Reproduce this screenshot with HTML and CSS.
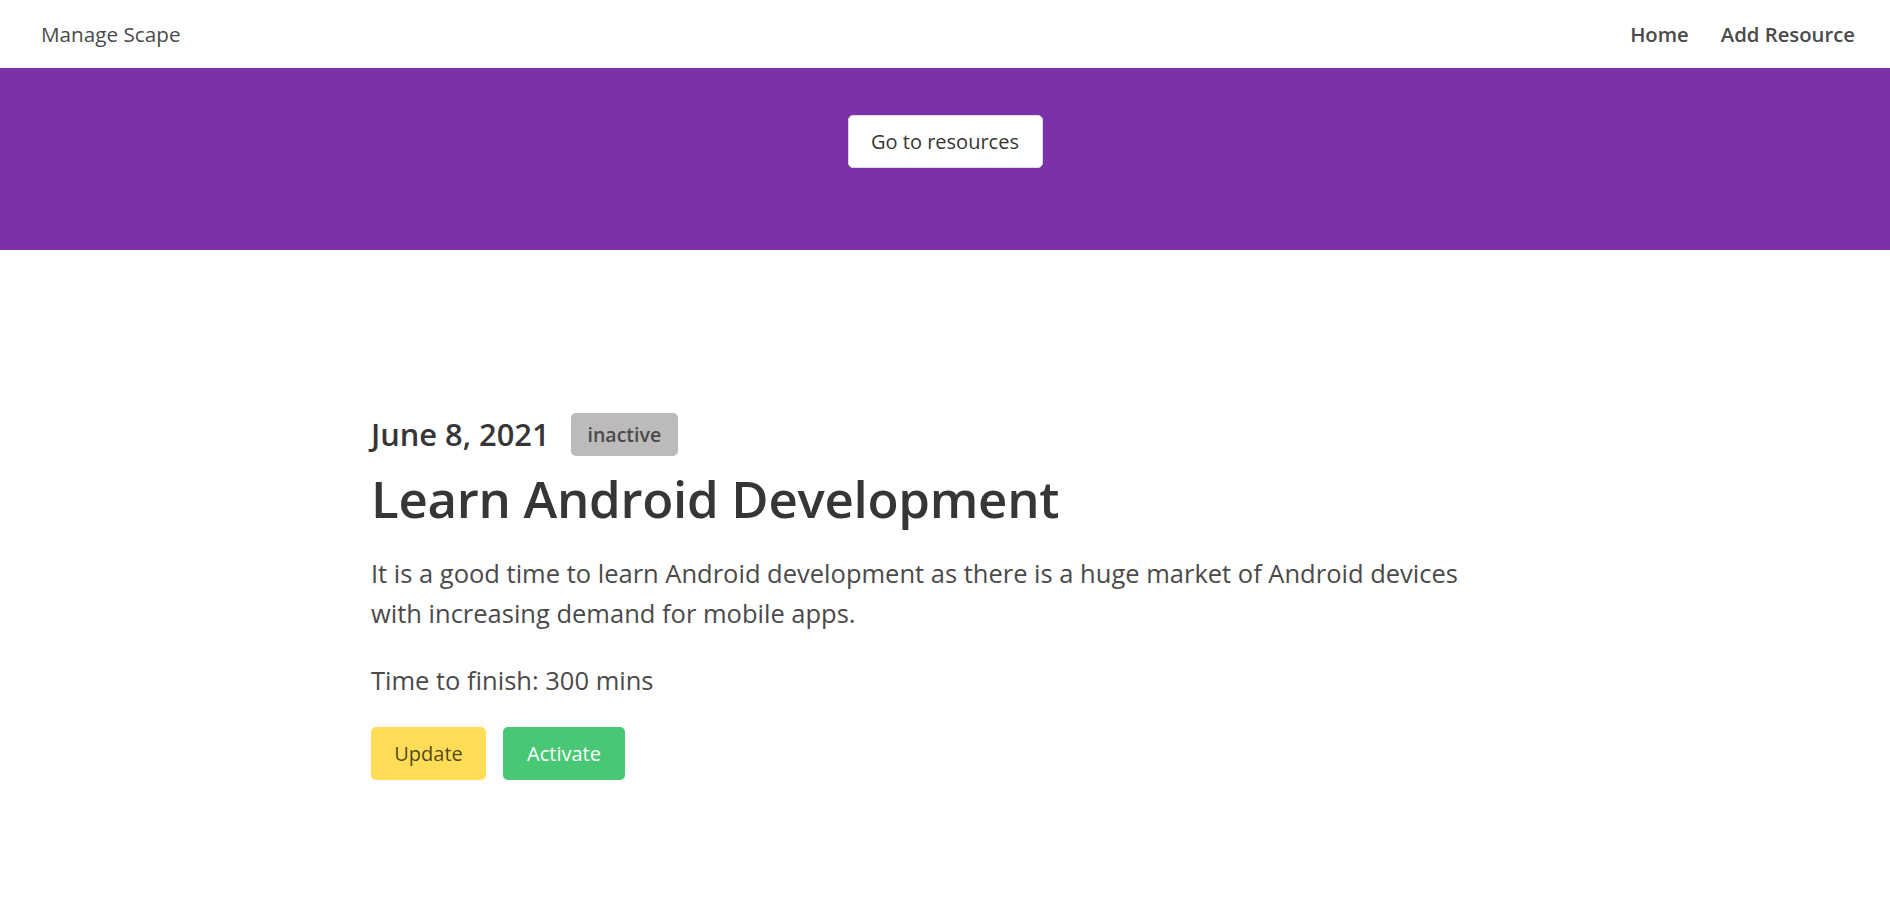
FILE: index.html
```html
<!DOCTYPE html>
<html lang="en">
<head>
<meta charset="utf-8">
<title>Manage Scape</title>
<link rel="stylesheet" href="styles.css">
</head>
<body>
<nav class="navbar">
  <a class="navbar-brand" href="#">Manage Scape</a>
  <div class="navbar-menu">
    <a class="navbar-item" href="#">Home</a>
    <a class="navbar-item" href="#">Add Resource</a>
  </div>
</nav>
<section class="hero">
  <a class="button button-light" href="#">Go to resources</a>
</section>
<section class="section">
  <div class="container">
    <div class="meta">
      <h2 class="subtitle">June 8, 2021</h2>
      <span class="tag">inactive</span>
    </div>
    <h1 class="title">Learn Android Development</h1>
    <p class="description">It is a good time to learn Android development as there is a huge market of Android devices with increasing demand for mobile apps.</p>
    <p class="time">Time to finish: 300 mins</p>
    <div class="buttons">
      <a class="button button-warning" href="#">Update</a>
      <a class="button button-success" href="#">Activate</a>
    </div>
  </div>
</section>
</body>
</html>
```

FILE: styles.css
```css
* { box-sizing: border-box; }
html, body { margin: 0; padding: 0; }
body {
  font-family: "Open Sans", "Noto Sans", sans-serif;
  color: #4a4a4a;
  background: #fff;
}
a { text-decoration: none; color: inherit; }

.navbar {
  height: 68px;
  display: flex;
  align-items: center;
  justify-content: space-between;
  padding: 0 19px 0 41px;
}
.navbar-brand {
  font-size: 20.7px;
  color: #4a4a4a;
}
.navbar-menu {
  display: flex;
}
.navbar-item {
  font-size: 20.3px;
  font-weight: 600;
  color: #4a4a4a;
  padding: 0 16px;
}

.hero {
  background: #7b31a8;
  height: 182px;
  display: flex;
  justify-content: center;
  align-items: flex-start;
  padding-top: 47px;
}

.button {
  display: inline-flex;
  align-items: center;
  justify-content: center;
  height: 53px;
  border-radius: 5px;
  font-size: 20px;
  padding: 0 22px;
  border: 1px solid transparent;
}
.button-light {
  background: #fff;
  color: #363636;
  border-color: #dbdbdb;
  width: 195px;
}
.button-warning {
  background: #ffdd57;
  color: rgba(0,0,0,0.7);
  width: 115px;
}
.button-success {
  background: #48c774;
  color: #fff;
  width: 122px;
}

.section {
  padding: 163px 0 80px;
}
.container {
  width: 1152px;
  margin: 0 auto;
  padding-left: 2px;
}
.meta {
  display: flex;
  align-items: center;
  gap: 21px;
}
.subtitle {
  margin: 0;
  font-size: 30.8px;
  font-weight: 600;
  color: #363636;
  line-height: 43px;
}
.tag {
  display: inline-flex;
  align-items: center;
  height: 43px;
  padding: 0 17px;
  background: #bcbaba;
  border-radius: 5px;
  font-size: 19.5px;
  font-weight: 600;
  color: #4a4a4a;
}
.title {
  margin: 4px 0 0;
  font-size: 51px;
  font-weight: 600;
  letter-spacing: -0.3px;
  color: #363636;
  line-height: 76px;
}
.description {
  margin: 17px 0 0;
  max-width: 1110px;
  font-size: 25.5px;
  line-height: 40px;
}
.time {
  margin: 27px 0 0;
  font-size: 25.5px;
  line-height: 40px;
}
.buttons {
  display: flex;
  gap: 17px;
  margin-top: 27px;
}
```
